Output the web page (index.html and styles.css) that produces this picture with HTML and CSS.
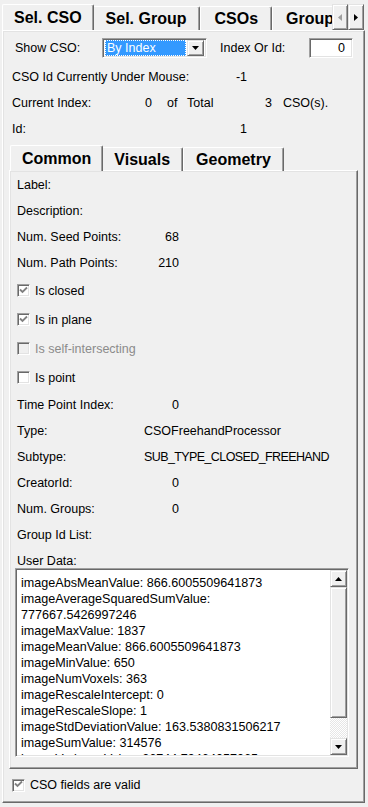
FILE: index.html
```html
<!DOCTYPE html>
<html lang="en">
<head>
  <meta charset="UTF-8" />
  <title>Sel. CSO</title>
  <link rel="stylesheet" href="styles.css">
</head>
<body>
  <div class="tabwidget outer">
    <div class="tabbar">
      <div class="tabs">
        <div class="tab active">Sel. CSO</div>
        <div class="tab">Sel. Group</div>
        <div class="tab">CSOs</div>
        <div class="tab">Groups</div>
      </div>
      <div class="tab-scroll">
        <span class="btn3d scroll-btn">
          <svg width="4" height="7" viewBox="0 0 4 7"><polygon points="4,0 4,7 0,3.5" fill="#a0a0a0"/></svg>
        </span>
        <span class="btn3d scroll-btn">
          <svg width="4" height="7" viewBox="0 0 4 7"><polygon points="0,0 0,7 4,3.5" fill="#000"/></svg>
        </span>
      </div>
    </div>

    <div class="pane outer-pane">
      <div class="row row-combo">
        <span class="lbl-show">Show CSO:</span>
        <div class="combo sunken">
          <span class="combo-val">By Index</span>
          <span class="btn3d combo-btn">
            <svg width="7" height="4" viewBox="0 0 7 4"><polygon points="0,0 7,0 3.5,4" fill="#000"/></svg>
          </span>
        </div>
        <span class="lbl-index">Index Or Id:</span>
        <div class="lineedit sunken">0</div>
      </div>

      <div class="row info-row r27">
        <span class="info-lbl">CSO Id Currently Under Mouse:</span>
        <span class="info-num">-1</span>
      </div>
      <div class="row info-row">
        <span class="cur-lbl">Current Index:</span>
        <span class="cur-num">0</span>
        <span class="cur-of">of</span>
        <span class="cur-total">Total</span>
        <span class="cur-num">3</span>
        <span class="cur-unit">CSO(s).</span>
      </div>
      <div class="row info-row">
        <span class="info-lbl">Id:</span>
        <span class="info-num">1</span>
      </div>

      <div class="tabwidget inner">
        <div class="tabbar">
          <div class="tabs">
            <div class="tab active">Common</div>
            <div class="tab">Visuals</div>
            <div class="tab">Geometry</div>
          </div>
        </div>

        <div class="pane inner-pane">
          <div class="field">Label:</div>
          <div class="field r27">Description:</div>
          <div class="field"><span class="num-pair"><span>Num. Seed Points:</span><span>68</span></span></div>
          <div class="field"><span class="num-pair"><span>Num. Path Points:</span><span>210</span></span></div>

          <div class="field check-row">
            <span class="check sunken"><svg width="9" height="9" viewBox="0 0 9 9"><path d="M1 3.5 L3.5 6 L8 1.5" fill="none" stroke="#808080" stroke-width="1.8"/></svg></span>
            Is closed
          </div>
          <div class="field check-row">
            <span class="check sunken"><svg width="9" height="9" viewBox="0 0 9 9"><path d="M1 3.5 L3.5 6 L8 1.5" fill="none" stroke="#808080" stroke-width="1.8"/></svg></span>
            Is in plane
          </div>
          <div class="field check-row disabled">
            <span class="check sunken"></span>
            Is self-intersecting
          </div>
          <div class="field check-row">
            <span class="check sunken"></span>
            Is point
          </div>

          <div class="field r27"><span class="num-pair"><span>Time Point Index:</span><span>0</span></span></div>
          <div class="field r25"><span class="str-lbl">Type:</span>CSOFreehandProcessor</div>
          <div class="field"><span class="str-lbl">Subtype:</span><span class="caps-val">SUB_TYPE_CLOSED_FREEHAND</span></div>
          <div class="field"><span class="num-pair"><span>CreatorId:</span><span>0</span></span></div>
          <div class="field"><span class="num-pair"><span>Num. Groups:</span><span>0</span></span></div>
          <div class="field">Group Id List:</div>
          <div class="field user-lbl">User Data:</div>

          <div class="textbox sunken">
            <div class="text-lines">
              <div>imageAbsMeanValue: 866.6005509641873</div>
              <div>imageAverageSquaredSumValue:</div>
              <div>777667.5426997246</div>
              <div>imageMaxValue: 1837</div>
              <div>imageMeanValue: 866.6005509641873</div>
              <div>imageMinValue: 650</div>
              <div>imageNumVoxels: 363</div>
              <div>imageRescaleIntercept: 0</div>
              <div>imageRescaleSlope: 1</div>
              <div>imageStdDeviationValue: 163.5380831506217</div>
              <div>imageSumValue: 314576</div>
              <div>imageVarianceValue: 26744.79464057065</div>
            </div>
            <div class="vscroll">
              <span class="btn3d sb-btn">
                <svg width="7" height="4" viewBox="0 0 7 4"><polygon points="3.5,0 7,4 0,4" fill="#000"/></svg>
              </span>
              <span class="btn3d sb-thumb"></span>
              <span class="sb-track"></span>
              <span class="btn3d sb-btn">
                <svg width="7" height="4" viewBox="0 0 7 4"><polygon points="0,0 7,0 3.5,4" fill="#000"/></svg>
              </span>
            </div>
          </div>
        </div>
      </div>

      <div class="row valid-row">
        <span class="check sunken"><svg width="9" height="9" viewBox="0 0 9 9"><path d="M1 3.5 L3.5 6 L8 1.5" fill="none" stroke="#808080" stroke-width="1.8"/></svg></span>
        CSO fields are valid
      </div>
    </div>
  </div>
</body>
</html>
```

FILE: styles.css
```css
* {
  box-sizing: border-box;
}

body {
  margin: 0;
  width: 368px;
  height: 807px;
  overflow: hidden;
  background: #f0f0f0;
  color: #000;
  font-family: "Liberation Sans", Arial, sans-serif;
  font-size: 12.5px;
}

/* 3d borders */
.sunken {
  border: 1px solid;
  border-color: #a0a0a0 #fff #fff #a0a0a0;
  box-shadow: inset 1px 1px #696969, inset -1px -1px #e3e3e3;
  background: #fff;
}

.btn3d {
  display: flex;
  align-items: center;
  justify-content: center;
  background: #f0f0f0;
  border: 1px solid;
  border-color: #e3e3e3 #696969 #696969 #e3e3e3;
  box-shadow: inset 1px 1px #fff, inset -1px -1px #a0a0a0;
}

/* tabs */
.tabwidget.outer {
  padding: 4px 3px 0 2px;
}

.tabbar {
  display: flex;
  align-items: flex-end;
  height: 26px;
  position: relative;
  z-index: 1;
}

.tabs {
  flex: 1;
  display: flex;
  align-items: flex-end;
  height: 26px;
  overflow: hidden;
  padding-left: 2px;
}

.tab {
  height: 24px;
  padding: 0 13px;
  display: flex;
  align-items: center;
  font-size: 16px;
  font-weight: bold;
  white-space: nowrap;
  border-top: 1px solid #fff;
  border-left: 1px solid #fff;
  border-right: 1px solid #696969;
  box-shadow: inset -1px 0 #a0a0a0;
  border-radius: 2px 2px 0 0;
}

.tab.active {
  position: relative;
  z-index: 2;
  height: 27px;
  margin: 0 -2px -1px;
  padding: 0 11px;
  background: #f0f0f0;
}

.inner .tab {
  padding: 0 12px;
}

.inner .tab.active {
  padding: 0 11px;
  margin-left: -1px;
}

.tab-scroll {
  display: flex;
  height: 26px;
  margin-right: 1px;
}

.scroll-btn {
  width: 16px;
  height: 26px;
}

.pane {
  border: 1px solid;
  border-color: #fff #696969 #696969 #fff;
  box-shadow: inset -1px -1px #a0a0a0, inset 1px 1px #e3e3e3;
}

.outer-pane {
  height: 773px;
}

/* outer rows */
.row {
  display: flex;
  align-items: center;
}

.row-combo {
  height: 20px;
  margin: 7px 0 5px;
  padding-left: 12px;
}

.lbl-show {
  width: 87px;
}

.combo {
  width: 105px;
  height: 20px;
  display: flex;
  align-items: center;
  padding: 2px;
}

.combo-val {
  flex: 1;
  height: 16px;
  line-height: 16px;
  padding-left: 2px;
  background: #3399ff;
  color: #fff;
  outline: 1px dotted #fff;
  outline-offset: -1px;
}

.combo-btn {
  width: 17px;
  height: 16px;
  margin-left: 1px;
}

.lbl-index {
  width: 89px;
  margin-left: 13px;
}

.lineedit {
  width: 44px;
  height: 20px;
  line-height: 18px;
  text-align: right;
  padding-right: 7px;
}

.info-row {
  height: 26px;
  padding-left: 9px;
}

.r27 {
  height: 27px;
}

.r25 {
  height: 25px;
}

.info-lbl {
  width: 223px;
}

.info-num {
  width: 12px;
  text-align: right;
}

.cur-lbl {
  width: 128px;
}

.cur-num {
  width: 12px;
  text-align: right;
}

.cur-of {
  width: 20px;
  margin-left: 15px;
}

.cur-total {
  width: 73px;
}

.cur-unit {
  margin-left: 11px;
}

/* inner tab widget */
.tabwidget.inner {
  margin: 3px 6px 0;
}

.inner .tabs {
  padding-left: 2px;
}

.inner-pane {
  height: 599px;
  margin-top: -1px;
  padding: 1px 0 0 7px;
}

.field {
  display: flex;
  align-items: center;
  height: 26px;
  white-space: nowrap;
}

.num-pair {
  display: flex;
  justify-content: space-between;
  width: 162px;
}

.str-lbl {
  flex-shrink: 0;
  width: 127px;
}

.caps-val {
  letter-spacing: -0.6px;
}

.check-row {
  height: 29px;
}

.check {
  width: 13px;
  height: 13px;
  margin-right: 5px;
  display: flex;
  align-items: center;
  justify-content: center;
  padding-bottom: 1px;
}

.disabled {
  color: #8b8b8b;
}

.disabled .check {
  background: #f0f0f0;
}

.user-lbl {
  height: 20px;
  align-items: flex-end;
}

.textbox {
  display: flex;
  width: 334px;
  height: 189px;
  margin-left: -2px;
  padding: 1px;
}

.text-lines {
  flex: 1;
  overflow: hidden;
  padding: 5px 0 0 4px;
  line-height: 16px;
  font-size: 12.6px;
  white-space: nowrap;
}

.vscroll {
  display: flex;
  flex-direction: column;
  width: 17px;
}

.sb-btn {
  height: 17px;
}

.sb-thumb {
  height: 131px;
}

.sb-track {
  flex: 1;
  background: repeating-conic-gradient(#e6e6e6 0 25%, #fff 0 50%) 0 0 / 2px 2px;
}

/* bottom check */
.valid-row {
  height: 30px;
  margin-top: 1px;
  padding-left: 9px;
}

.valid-row .check {
  margin-right: 5px;
}
```
